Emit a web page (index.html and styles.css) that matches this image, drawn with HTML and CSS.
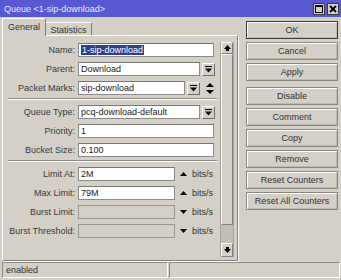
FILE: index.html
```html
<!DOCTYPE html>
<html lang="en">
<head>
  <meta charset="UTF-8">
  <title>Queue &lt;1-sip-download&gt;</title>
  <link rel="stylesheet" href="styles.css">
</head>
<body>
  <div class="window">
    <div class="titlebar">
      <span class="title">Queue &lt;1-sip-download&gt;</span>
      <div class="win-btns">
        <span class="win-btn">
          <svg width="8" height="8" viewBox="0 0 8 8"><rect x="0.5" y="0.5" width="7" height="7" fill="none" stroke="#000"/><rect x="0" y="0" width="8" height="2" fill="#000"/></svg>
        </span>
        <span class="win-btn">
          <svg width="8" height="8" viewBox="0 0 8 8"><path d="M1 1 L7 7 M7 1 L1 7" stroke="#000" stroke-width="1.8"/></svg>
        </span>
      </div>
    </div>

    <div class="main">
      <div class="left">
        <div class="tabs">
          <div class="tab active">General</div>
          <div class="tab">Statistics</div>
        </div>
        <div class="panel">
          <div class="form">
            <div class="row">
              <label>Name:</label>
              <div class="input w-full"><span class="sel">1-sip-download</span></div>
            </div>
            <div class="row">
              <label>Parent:</label>
              <div class="input w-drop">Download</div>
              <span class="ddbtn"><svg width="7" height="7" viewBox="0 0 7 7"><rect x="0" y="0" width="7" height="1" fill="#000"/><polygon points="0,2.5 7,2.5 3.5,6.5" fill="#000"/></svg></span>
            </div>
            <div class="row">
              <label>Packet Marks:</label>
              <div class="input w-mark">sip-download</div>
              <span class="ddbtn"><svg width="7" height="7" viewBox="0 0 7 7"><rect x="0" y="0" width="7" height="1" fill="#000"/><polygon points="0,2.5 7,2.5 3.5,6.5" fill="#000"/></svg></span>
              <span class="updown"><svg width="8" height="11" viewBox="0 0 8 11"><polygon points="4,0 8,4 0,4" fill="#000"/><polygon points="0,7 8,7 4,11" fill="#000"/></svg></span>
            </div>
            <div class="sep"></div>

            <div class="row">
              <label>Queue Type:</label>
              <div class="input w-drop">pcq-download-default</div>
              <span class="ddbtn"><svg width="7" height="7" viewBox="0 0 7 7"><rect x="0" y="0" width="7" height="1" fill="#000"/><polygon points="0,2.5 7,2.5 3.5,6.5" fill="#000"/></svg></span>
            </div>
            <div class="row">
              <label>Priority:</label>
              <div class="input w-full">1</div>
            </div>
            <div class="row">
              <label>Bucket Size:</label>
              <div class="input w-full">0.100</div>
            </div>
            <div class="sep"></div>

            <div class="row">
              <label>Limit At:</label>
              <div class="input w-rate">2M</div>
              <span class="arrow"><svg width="7" height="4" viewBox="0 0 7 4"><polygon points="3.5,0 7,4 0,4" fill="#000"/></svg></span>
              <span class="unit">bits/s</span>
            </div>
            <div class="row">
              <label>Max Limit:</label>
              <div class="input w-rate">79M</div>
              <span class="arrow"><svg width="7" height="4" viewBox="0 0 7 4"><polygon points="3.5,0 7,4 0,4" fill="#000"/></svg></span>
              <span class="unit">bits/s</span>
            </div>
            <div class="row">
              <label>Burst Limit:</label>
              <div class="input w-rate disabled"></div>
              <span class="arrow"><svg width="7" height="4" viewBox="0 0 7 4"><polygon points="0,0 7,0 3.5,4" fill="#000"/></svg></span>
              <span class="unit">bits/s</span>
            </div>
            <div class="row">
              <label>Burst Threshold:</label>
              <div class="input w-rate disabled"></div>
              <span class="arrow"><svg width="7" height="4" viewBox="0 0 7 4"><polygon points="0,0 7,0 3.5,4" fill="#000"/></svg></span>
              <span class="unit">bits/s</span>
            </div>
          </div>

          <div class="scroll">
            <span class="scroll-btn up"><svg width="7" height="6" viewBox="0 0 7 6"><polygon points="3.5,0 7,4 0,4" fill="#000"/><rect x="2" y="4" width="3" height="2" fill="#000"/></svg></span>
            <span class="thumb"></span>
            <span class="track"></span>
            <span class="scroll-btn down"><svg width="7" height="6" viewBox="0 0 7 6"><rect x="2" y="0" width="3" height="2" fill="#000"/><polygon points="0,2 7,2 3.5,6" fill="#000"/></svg></span>
          </div>
        </div>
      </div>

      <div class="actions">
        <button class="btn default">OK</button>
        <button class="btn">Cancel</button>
        <button class="btn">Apply</button>
        <button class="btn spaced">Disable</button>
        <button class="btn">Comment</button>
        <button class="btn">Copy</button>
        <button class="btn">Remove</button>
        <button class="btn">Reset Counters</button>
        <button class="btn">Reset All Counters</button>
      </div>
    </div>

    <div class="statusbar">
      <div class="status first">enabled</div>
      <div class="status second"></div>
    </div>
  </div>
</body>
</html>
```

FILE: styles.css
```css
*, *::before, *::after {
  box-sizing: border-box;
}
body {
  margin: 0;
  padding: 0;
  background: #d4d0c8;
  font-family: "Liberation Sans", Arial, sans-serif;
  font-size: 9px;
  color: #333;
}
.window {
  width: 341px;
  height: 280px;
}

/* title bar */
.titlebar {
  height: 17px;
  background: #5858d2;
  display: flex;
  align-items: center;
  justify-content: space-between;
  padding: 0 2px 0 4px;
}
.title {
  color: #e8e8fa;
}
.win-btns {
  display: flex;
  gap: 2px;
}
.win-btn {
  width: 12px;
  height: 12px;
  border: 1px solid #3c3c3c;
  background: #d4d0c8;
  display: flex;
  align-items: center;
  justify-content: center;
}

.main {
  display: flex;
  height: 244px;
}

/* tabs + panel */
.left {
  width: 236px;
  margin-left: 2px;
  padding-top: 1px;
  display: flex;
  flex-direction: column;
}
.tabs {
  display: flex;
  align-items: flex-end;
  height: 17px;
}
.tab {
  width: 46px;
  height: 13px;
  border-top: 1px solid #fff;
  border-right: 1px solid #808080;
  display: flex;
  align-items: center;
  justify-content: center;
  padding-top: 1px;
}
.tab.active {
  width: 44px;
  height: 18px;
  margin-bottom: -1px;
  border-left: 1px solid #fff;
  background: #d4d0c8;
  position: relative;
  z-index: 1;
  padding-bottom: 2px;
}
.panel {
  height: 226px;
  border: 1px solid;
  border-color: #fff #808080 #808080 #fff;
  box-shadow: 1px 1px 0 #fff;
  display: flex;
}
.form {
  flex: 1;
  padding: 7px 0 0 5px;
}
.row {
  display: flex;
  align-items: center;
  height: 14px;
  margin-bottom: 5px;
}
.row label {
  width: 67px;
  margin-right: 3px;
  text-align: right;
  flex-shrink: 0;
  color: #3a3a3a;
  white-space: nowrap;
}
.input {
  height: 14px;
  border: 1px solid #8c8c8c;
  border-top-color: #777;
  background: #fff;
  padding: 0 2px;
  display: flex;
  align-items: center;
  color: #222;
  white-space: nowrap;
  overflow: hidden;
}
.input.disabled {
  background: #d4d0c8;
  border-color: #9a9790;
}
.w-full { width: 136px; }
.w-drop { width: 122px; }
.w-mark { width: 107px; }
.w-rate { width: 97px; }
.sel {
  background: #2e3f8f;
  color: #fff;
  line-height: 10px;
  padding: 0 1px;
}
.ddbtn {
  width: 13px;
  height: 13px;
  margin-left: 2px;
  border: 1px solid;
  border-color: #fff #6e6e6e #6e6e6e #fff;
  background: #d4d0c8;
  display: flex;
  align-items: center;
  justify-content: center;
}
.updown {
  margin-left: 6px;
  display: flex;
}
.arrow {
  margin-left: 5px;
  display: flex;
}
.unit {
  margin-left: 5px;
  color: #333;
}
.sep {
  margin: -2px 1px 5px 0;
  border-top: 1px solid #8c8a84;
  border-bottom: 1px solid #fff;
}

/* scrollbar */
.scroll {
  width: 14px;
  margin: 6px 3px 3px 2px;
  display: flex;
  flex-direction: column;
  border-left: 1px solid #a8a49c;
  border-right: 1px solid #a8a49c;
}
.scroll-btn {
  height: 12px;
  border: 1px solid;
  border-color: #fff #808080 #808080 #fff;
  display: flex;
  align-items: center;
  justify-content: center;
}
.scroll-btn.down {
  height: 14px;
}
.thumb {
  flex: 1;
  border: 1px solid;
  border-color: #fff #808080 #808080 #fff;
}
.track {
  height: 18px;
  background: #c2beb6;
}

/* buttons */
.actions {
  width: 92px;
  margin-left: 8px;
  padding-top: 4px;
  display: flex;
  flex-direction: column;
  gap: 3px;
}
.btn {
  height: 18px;
  padding: 0;
  border: 1px solid #8a8780;
  box-shadow: inset 1px 1px 0 #fff, inset -1px -1px 0 #bdb9b1;
  background: #d4d0c8;
  font-family: inherit;
  font-size: 9px;
  color: #333;
  display: flex;
  align-items: center;
  justify-content: center;
}
.btn.default {
  border-color: #3c3c3c;
}
.btn.spaced {
  margin-top: 3px;
}

/* status bar */
.statusbar {
  display: flex;
  gap: 1px;
  margin-top: 1px;
  padding-left: 2px;
}
.status {
  height: 16px;
  border: 1px solid;
  border-color: #8c8a84 #fff #fff #8c8a84;
  padding-left: 3px;
  display: flex;
  align-items: center;
  color: #333;
}
.status.first { width: 166px; }
.status.second { width: 171px; }
```
